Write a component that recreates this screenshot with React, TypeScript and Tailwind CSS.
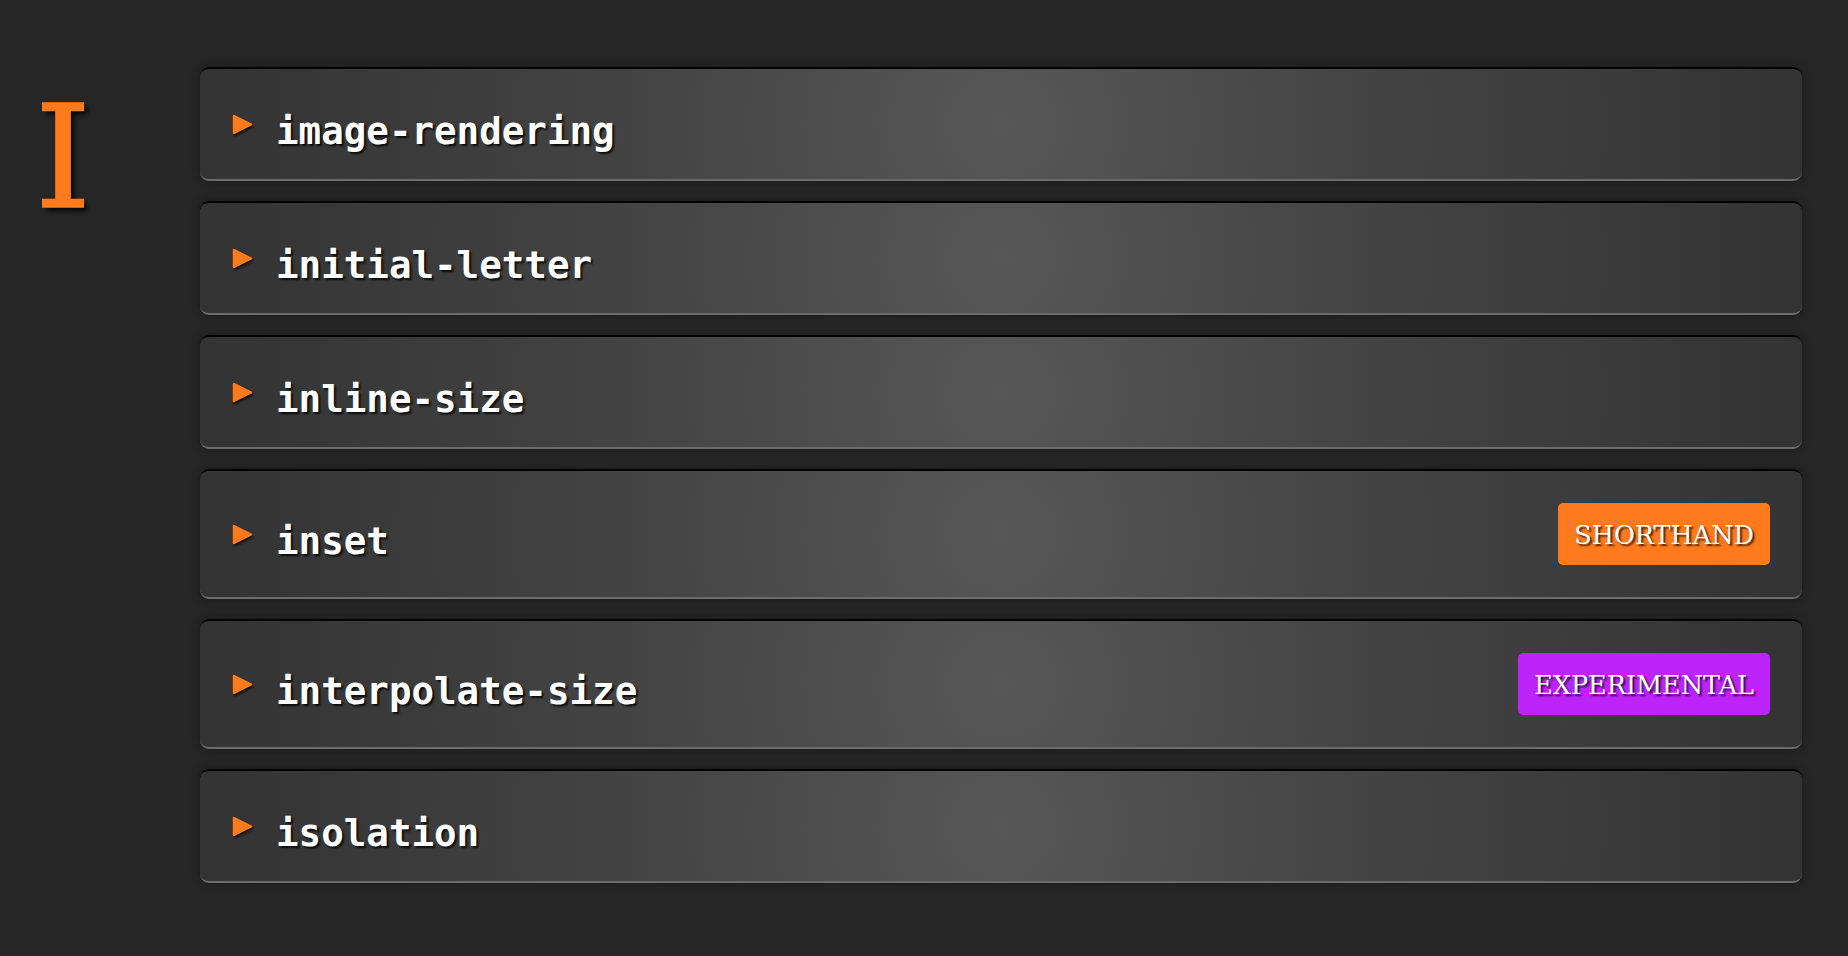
import React from "react";

type Item = { name: string; badge?: "shorthand" | "experimental" };

const items: Item[] = [
  { name: "image-rendering" },
  { name: "initial-letter" },
  { name: "inline-size" },
  { name: "inset", badge: "shorthand" },
  { name: "interpolate-size", badge: "experimental" },
  { name: "isolation" },
];

function Triangle() {
  return (
    <svg
      width="22"
      height="21"
      viewBox="0 0 22 21"
      className="shrink-0 drop-shadow-[1px_2px_1px_rgba(0,0,0,0.7)]"
    >
      <polygon
        points="2,2 19,10.5 2,19"
        fill="#fd7b1c"
        stroke="#fd7b1c"
        strokeWidth="2.5"
        strokeLinejoin="round"
      />
    </svg>
  );
}

function Badge({ kind }: { kind: "shorthand" | "experimental" }) {
  const cls = kind === "shorthand" ? "bg-[#fd7b1c]" : "bg-[#bd24f9]";
  return (
    <span
      className={`${cls} ml-auto flex h-[62px] items-center rounded-[5px] px-4 text-[25.5px] text-white [text-shadow:2px_2px_2px_rgba(0,0,0,0.75)] [font-family:'DejaVu_Serif',serif]`}
    >
      <span className="translate-y-[1px]">{kind.toUpperCase()}</span>
    </span>
  );
}

function Card({ item }: { item: Item }) {
  return (
    <div className="flex items-center rounded-[9px] border-t-2 border-b-2 border-t-black border-b-[#6c6c6c] bg-[radial-gradient(circle_at_center,#575757_0%,#444444_45%,#333333_100%)] py-8 pl-[32px] pr-8 shadow-[0_0_8px_rgba(0,0,0,0.35)]">
      <Triangle />
      <span className="ml-[22px] translate-y-[7px] text-[37.5px] leading-[46px] font-bold text-white [text-shadow:2px_2px_2px_rgba(0,0,0,0.8)] [font-family:'DejaVu_Sans_Mono',monospace]">
        {item.name}
      </span>
      {item.badge && <Badge kind={item.badge} />}
    </div>
  );
}

export default function App() {
  return (
    <div className="min-h-screen w-full bg-[#262626]">
      <div className="flex pt-[67px] pb-[74px]">
        <div className="w-[200px] shrink-0 pl-[35px] pt-[20px]">
          <div className="text-[142px] leading-none text-[#fd7b1c] [-webkit-text-stroke:1.6px_#fd7b1c] [text-shadow:4px_4px_5px_rgba(0,0,0,0.85)] [font-family:'DejaVu_Serif',serif]">
            I
          </div>
        </div>
        <div className="mr-[46px] flex flex-1 flex-col gap-5">
          {items.map((it) => (
            <Card key={it.name} item={it} />
          ))}
        </div>
      </div>
    </div>
  );
}
